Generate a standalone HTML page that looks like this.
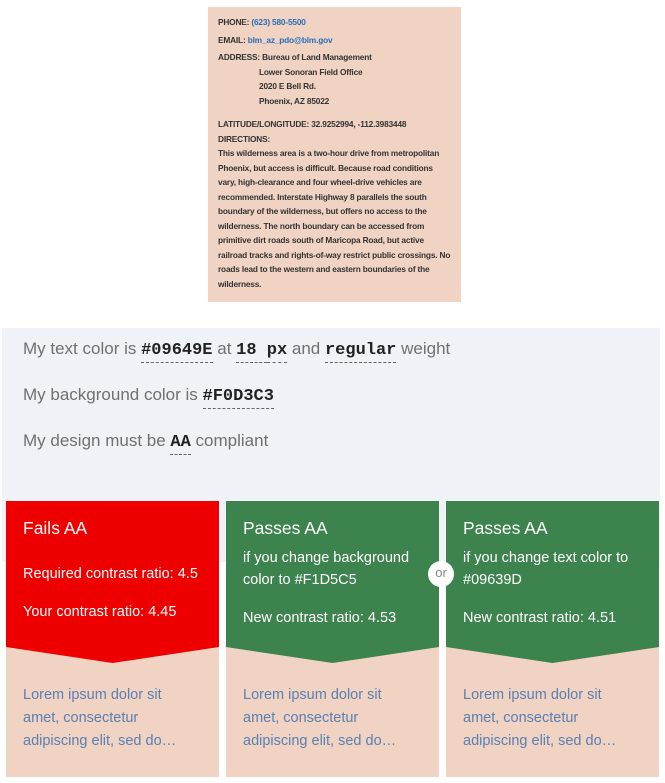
<!DOCTYPE html>
<html><head><style>
body{margin:0;width:665px;height:783px;background:#fff;position:relative;overflow:hidden;font-family:"Liberation Sans",sans-serif}
.top{position:absolute;left:208px;top:7px;width:253px;height:295px;background:#f0d3c3;box-sizing:border-box;padding:8px 10px 0 10px;font-size:8.3px;font-weight:bold;color:#333;line-height:14.5px;font-family:"Liberation Sans Narrow","Liberation Sans",sans-serif;letter-spacing:-0.17px}
.top a{color:#2a6ebb;text-decoration:none}
.top p{margin:0 0 3px}
.ind{padding-left:41px}
.panel{position:absolute;left:2px;top:328px;width:658px;height:234px;background:#eff3f8}
.line{position:absolute;left:23px;font-size:17px;color:#707070}
.code{font-family:"Liberation Mono",monospace;font-weight:bold;color:#222;border-bottom:1px dashed #666;padding-bottom:2px}
.card{position:absolute;top:501px;width:213px;height:276px;background:#f0d3c3}
.head{position:absolute;left:0;top:0;width:213px;height:162px;clip-path:polygon(0 0,100% 0,100% 146px,50% 162px,0 146px);color:#fff;box-sizing:border-box;padding:17px 17px 0}
.head h3{margin:0 0 8px;font-weight:normal;font-size:17.5px}
.head div{font-size:14.5px;line-height:22px}
.lorem{position:absolute;left:17px;top:183px;color:#5a80b4;font-size:14.5px;line-height:23px;width:172px}
.or{position:absolute;left:428px;top:561px;width:26px;height:26px;border-radius:50%;background:#fff;color:#888;font-size:13px;text-align:center;line-height:24px}
</style></head><body>
<div class="top">
<p>PHONE: <a>(623) 580-5500</a></p>
<p>EMAIL: <a>blm_az_pdo@blm.gov</a></p>
<div>ADDRESS: Bureau of Land Management</div>
<div class="ind">Lower Sonoran Field Office</div>
<div class="ind">2020 E Bell Rd.</div>
<div class="ind">Phoenix, AZ 85022</div>
<div style="height:9px"></div>
<div>LATITUDE/LONGITUDE: 32.9252994, -112.3983448</div>
<div>DIRECTIONS:</div>
<div>This wilderness area is a two-hour drive from metropolitan Phoenix, but access is difficult. Because road conditions vary, high-clearance and four wheel-drive vehicles are recommended. Interstate Highway 8 parallels the south boundary of the wilderness, but offers no access to the wilderness. The north boundary can be accessed from primitive dirt roads south of Maricopa Road, but active railroad tracks and rights-of-way restrict public crossings. No roads lead to the western and eastern boundaries of the wilderness.</div>
</div>
<div class="panel"></div>
<div class="line" style="top:339px">My text color is <span class="code">#09649E</span> at <span class="code">18 </span> <span class="code">px</span> and <span class="code">regular</span> weight</div>
<div class="line" style="top:385px">My background color is <span class="code">#F0D3C3</span></div>
<div class="line" style="top:431px">My design must be <span class="code">AA</span> compliant</div>

<div class="card" style="left:6px"><div class="head" style="background:#ee0000"><h3>Fails AA</h3><div style="margin-top:24px">Required contrast ratio: 4.5</div><div style="margin-top:16px">Your contrast ratio: 4.45</div></div><div class="lorem">Lorem ipsum dolor sit amet, consectetur adipiscing elit, sed do…</div></div>
<div class="card" style="left:226px"><div class="head" style="background:#3d834d"><h3>Passes AA</h3><div>if you change background color to #F1D5C5</div><div style="margin-top:16px">New contrast ratio: 4.53</div></div><div class="lorem">Lorem ipsum dolor sit amet, consectetur adipiscing elit, sed do…</div></div>
<div class="card" style="left:446px"><div class="head" style="background:#3d834d"><h3>Passes AA</h3><div>if you change text color to #09639D</div><div style="margin-top:16px">New contrast ratio: 4.51</div></div><div class="lorem">Lorem ipsum dolor sit amet, consectetur adipiscing elit, sed do…</div></div>
<div class="or">or</div>
</body></html>
